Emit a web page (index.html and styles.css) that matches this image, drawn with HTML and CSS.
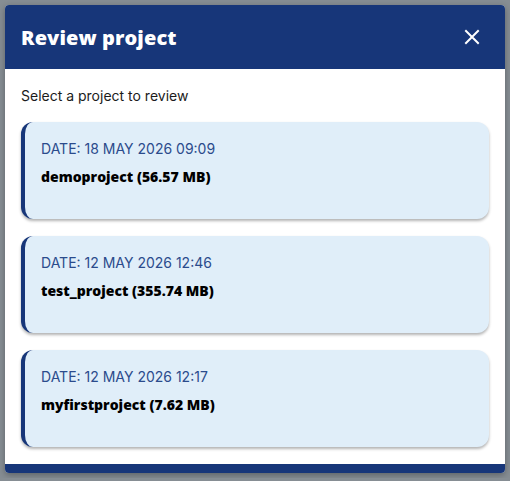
FILE: index.html
```html
<!DOCTYPE html>
<html>

<head>
	<meta charset="utf-8">
	<title>Review project</title>
	<link rel="stylesheet" href="styles.css">
</head>

<body>
	<div class="modal">
		<div class="modal-header">
			<h2 class="modal-title">Review project</h2>
			<button class="close-btn" aria-label="Close">
				<svg width="16" height="16" viewBox="0 0 16 16">
					<path d="M2 2 L14 14 M14 2 L2 14" stroke="#fff" stroke-width="2" stroke-linecap="square" fill="none" />
				</svg>
			</button>
		</div>
		<div class="modal-body">
			<p class="hint">Select a project to review</p>
			<ul class="projects">
				<li class="project">
					<div class="project-date">DATE: 18 MAY 2026 09:09</div>
					<div class="project-name">demoproject (56.57 MB)</div>
				</li>
				<li class="project">
					<div class="project-date">DATE: 12 MAY 2026 12:46</div>
					<div class="project-name">test_project (355.74 MB)</div>
				</li>
				<li class="project">
					<div class="project-date">DATE: 12 MAY 2026 12:17</div>
					<div class="project-name">myfirstproject (7.62 MB)</div>
				</li>
			</ul>
		</div>
		<div class="modal-footer"></div>
	</div>
</body>

</html>
```

FILE: styles.css
```css
body {
	margin: 0;
	background: #868d93;
	font-family: "Inter", "Liberation Sans", sans-serif;
	padding: 5px;
}

.modal {
	width: 500px;
	background: #fff;
	border-radius: 4px;
	overflow: hidden;
	box-shadow: 0 2px 6px rgba(0, 0, 0, 0.3);
}

.modal-header {
	height: 64px;
	background: #173679;
	display: flex;
	align-items: center;
	justify-content: space-between;
	padding: 0 25px 0 16px;
	box-sizing: border-box;
}

.modal-title {
	margin: 0;
	color: #fff;
	font-family: "Open Sans", "Liberation Sans", sans-serif;
	font-weight: 800;
	font-size: 20px;
	letter-spacing: 0.1px;
}

.close-btn {
	background: none;
	border: 0;
	padding: 0;
	display: flex;
	cursor: pointer;
}

.modal-body {
	padding: 17px 16px 17px;
}

.hint {
	margin: 0 0 16px;
	font-size: 14px;
	line-height: 20px;
	color: #1b1b1b;
}

.projects {
	list-style: none;
	margin: 0;
	padding: 0;
	display: flex;
	flex-direction: column;
	gap: 17px;
}

.project {
	background: #e0eef9;
	border-left: 4px solid #173679;
	border-radius: 12px;
	padding: 17px 16px 32px;
	box-shadow: 0 2px 3px rgba(0, 0, 0, 0.3);
}

.project-date {
	font-size: 14px;
	line-height: 20px;
	color: #2b4b8c;
}

.project-name {
	margin-top: 8px;
	font-family: "Open Sans", "Liberation Sans", sans-serif;
	font-weight: 800;
	font-size: 14px;
	line-height: 20px;
	color: #000;
}

.modal-footer {
	height: 9px;
	background: #173679;
}
```
